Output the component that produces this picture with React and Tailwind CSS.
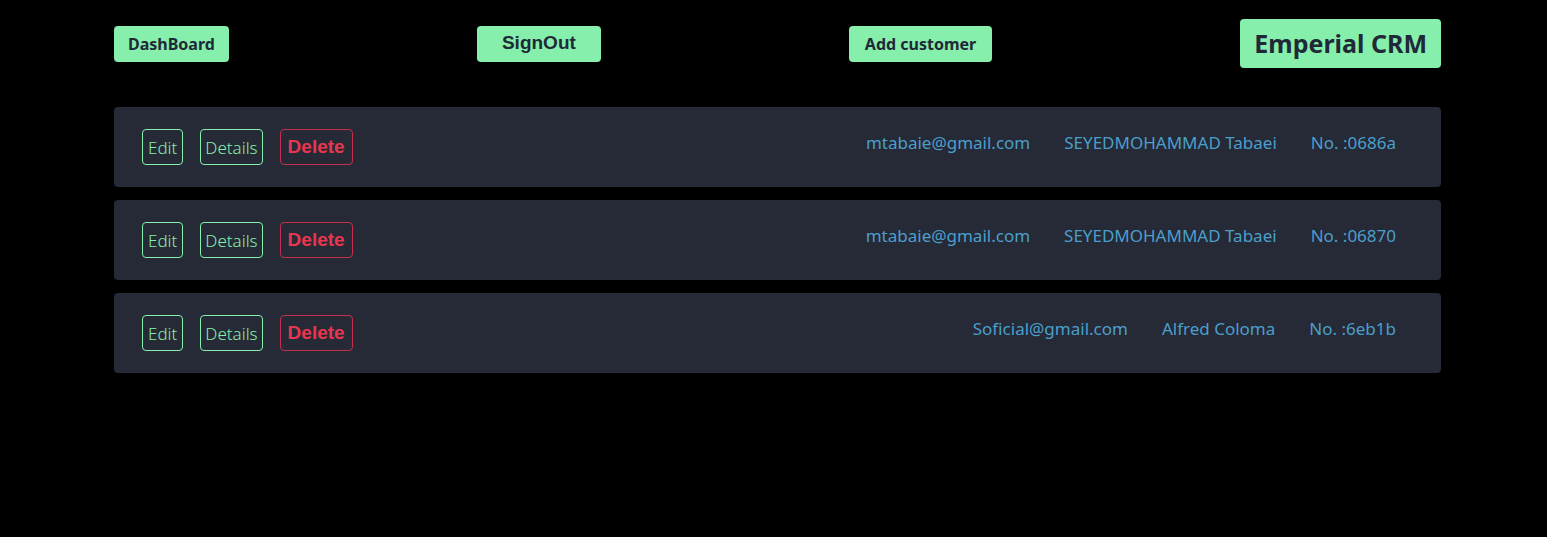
import React from "react";

const customers = [
  { id: "0686a", name: "SEYEDMOHAMMAD Tabaei", email: "mtabaie@gmail.com" },
  { id: "06870", name: "SEYEDMOHAMMAD Tabaei", email: "mtabaie@gmail.com" },
  { id: "6eb1b", name: "Alfred Coloma", email: "Soficial@gmail.com" },
];

const segoe = "font-['Noto_Sans',sans-serif]";

const CustomerRow = ({ customer }) => (
  <div className="flex items-center justify-between h-[80px] bg-[#262936] rounded-[4px] pl-[28px] pr-[45px]">
    <div className="flex items-center gap-[17px]">
      <button className={`h-[36px] pt-[2px] px-[5px] border border-[#86efac] rounded-[4px] text-[#86efac] text-[17px] font-light ${segoe}`}>
        Edit
      </button>
      <button className={`h-[36px] pt-[2px] px-[4px] border border-[#86efac] rounded-[4px] text-[#86efac] text-[17px] font-light ${segoe}`}>
        Details
      </button>
      <button className="h-[36px] px-[7px] border border-[#c2304c] rounded-[4px] text-[#e8364f] text-[19px] font-bold font-['Liberation_Sans',sans-serif]">
        Delete
      </button>
    </div>
    <div className={`flex items-center gap-[34px] -mt-[8px] text-[#4a9fcb] text-[17px] ${segoe}`}>
      <span>{customer.email}</span>
      <span>{customer.name}</span>
      <span>No. :{customer.id}</span>
    </div>
  </div>
);

export default function App() {
  return (
    <div className="min-h-[537px] bg-black pl-[114px] pr-[106px] pt-[19px]">
      {/* Header */}
      <div className="flex items-center justify-between h-[49px]">
        <button className={`h-[36px] px-[14px] bg-[#86efac] rounded-[4px] text-[#1f2937] text-[16px] font-bold ${segoe}`}>
          DashBoard
        </button>
        <button className="h-[36px] px-[25px] bg-[#86efac] rounded-[4px] text-[#1f2937] text-[19px] font-bold font-['Liberation_Sans',sans-serif]">
          SignOut
        </button>
        <button className={`h-[36px] px-[16px] bg-[#86efac] rounded-[4px] text-[#1f2937] text-[16px] font-bold ${segoe}`}>
          Add customer
        </button>
        <div className={`h-[49px] flex items-center px-[14px] bg-[#86efac] rounded-[4px] text-[#1f2937] text-[25px] font-bold ${segoe}`}>
          Emperial CRM
        </div>
      </div>

      {/* Customer list */}
      <div className="mt-[39px] flex flex-col gap-[13px]">
        {customers.map((c) => (
          <CustomerRow key={c.id} customer={c} />
        ))}
      </div>
    </div>
  );
}
